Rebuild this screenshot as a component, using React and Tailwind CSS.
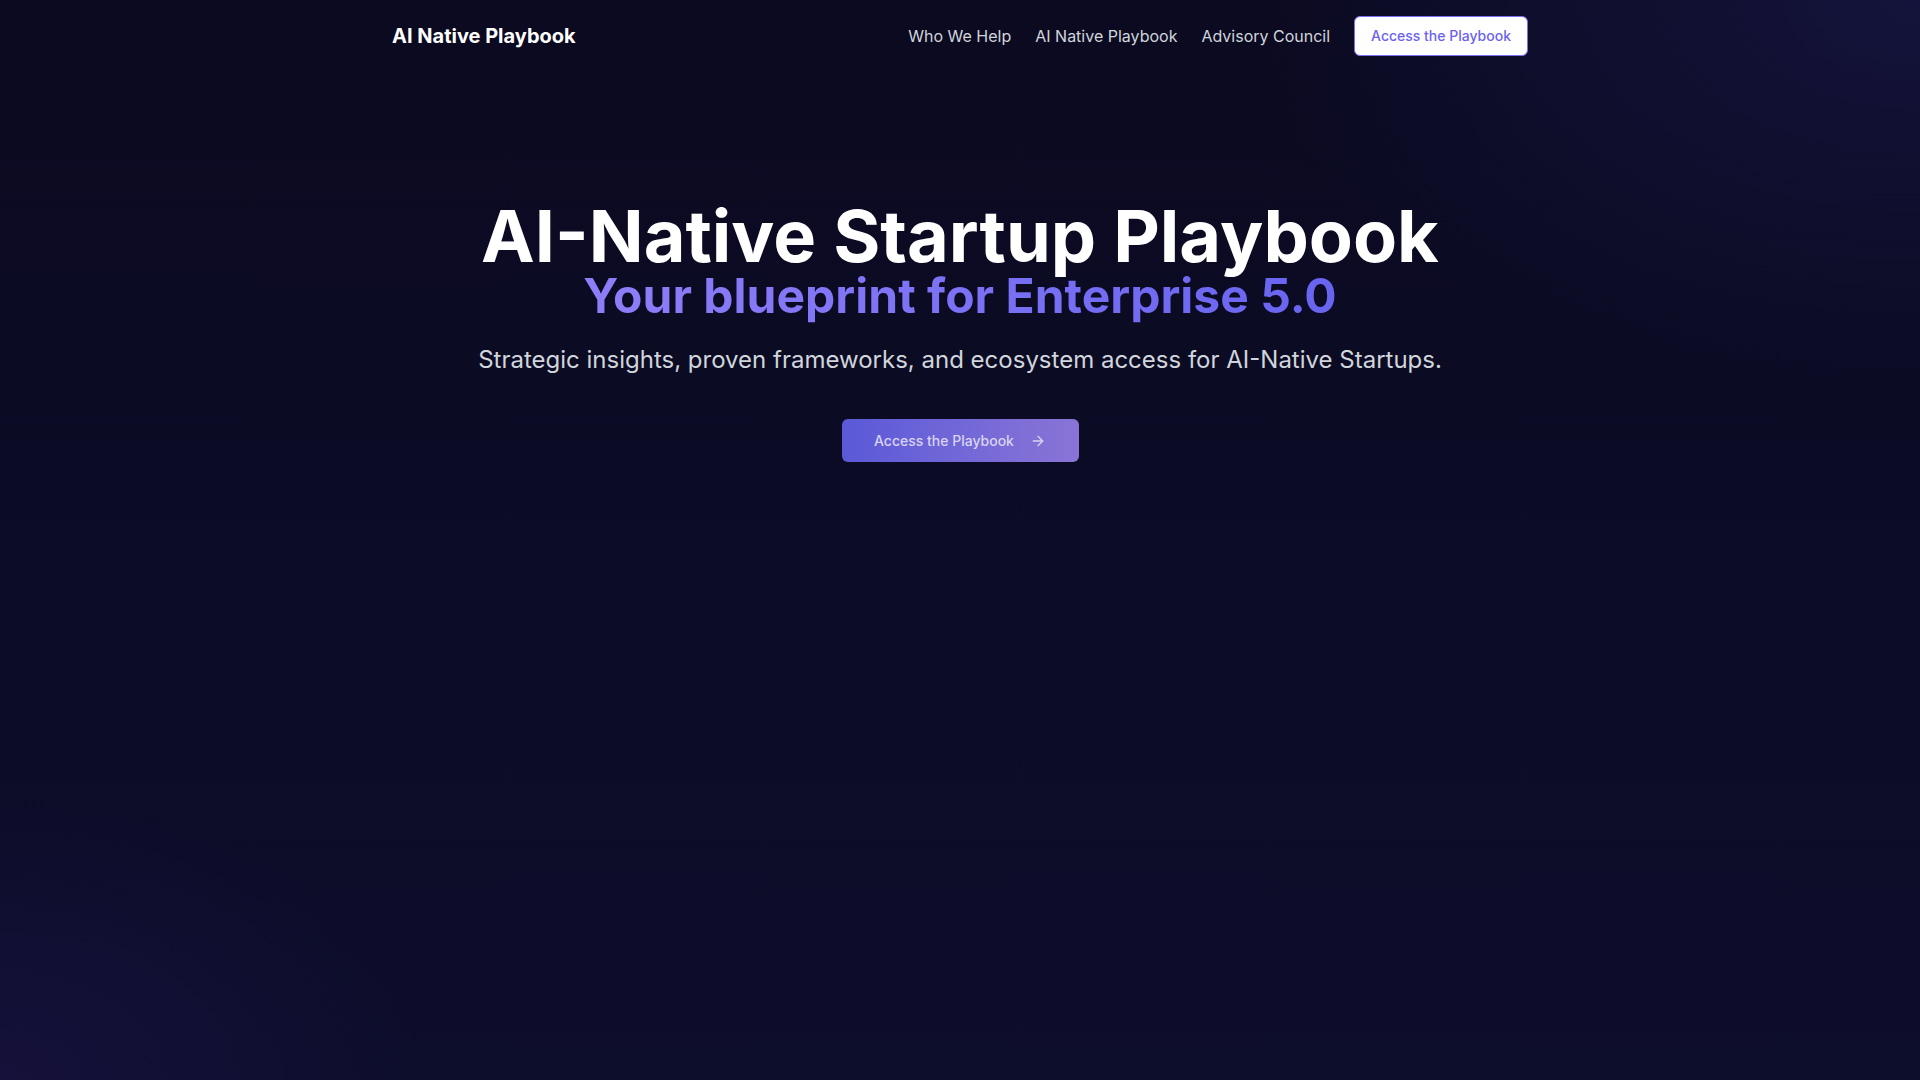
import React from "react";
import { ArrowRight } from "lucide-react";

const navLinks = ["Who We Help", "AI Native Playbook", "Advisory Council"];

export default function App() {
  return (
    <div
      className="min-h-screen w-full bg-[#0b0a22] bg-[radial-gradient(ellipse_900px_520px_at_100%_0%,#14133b,transparent_75%),radial-gradient(ellipse_600px_400px_at_0%_100%,#15113a,transparent_70%),linear-gradient(to_bottom,#0b0a20,#0d0d2c)] text-white"
      style={{ fontFamily: "Inter, 'Noto Sans', sans-serif" }}
    >
      {/* Top nav */}
      <header className="mx-auto flex h-[71px] w-[1136px] items-center justify-between">
        <a href="#" className="text-[20px] font-bold text-white">
          AI Native Playbook
        </a>
        <nav className="flex items-center gap-6">
          {navLinks.map((link) => (
            <a key={link} href="#" className="text-[16px] text-gray-300">
              {link}
            </a>
          ))}
          <button className="h-[40px] rounded-md border border-[#7c70f2] bg-white px-4 text-[14px] font-medium text-[#6b62f0]">
            Access the Playbook
          </button>
        </nav>
      </header>

      {/* Hero */}
      <main className="flex flex-col items-center pt-[129px] text-center">
        <h1 className="text-[72px] font-bold leading-none text-white">
          AI-Native Startup Playbook
        </h1>
        <h2 className="bg-gradient-to-r from-[#8e7ef8] to-[#6864f0] bg-clip-text pb-1 text-[48px] font-bold leading-none text-transparent">
          Your blueprint for Enterprise 5.0
        </h2>
        <p className="mt-5 text-[24px] leading-8 text-gray-300">
          Strategic insights, proven frameworks, and ecosystem access for AI-Native Startups.
        </p>
        <button className="mt-[43px] flex h-[43px] w-[237px] items-center justify-center gap-4 rounded-md bg-gradient-to-r from-[#5b59d8] to-[#8a74d6] text-[14px] font-medium text-[#d8d4f2]">
          Access the Playbook
          <ArrowRight className="h-4 w-4" strokeWidth={2} />
        </button>
      </main>
    </div>
  );
}
